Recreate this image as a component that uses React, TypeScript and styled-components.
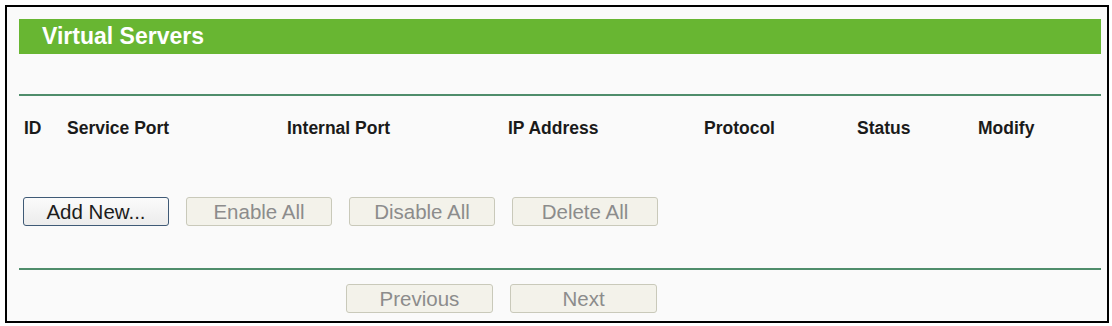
import React from "react";
import styled, { createGlobalStyle } from "styled-components";

const GlobalStyle = createGlobalStyle`
  html, body {
    margin: 0;
    padding: 0;
    background: #ffffff;
  }
  body {
    font-family: "Liberation Sans", Arial, sans-serif;
  }
`;

const Frame = styled.div`
  box-sizing: border-box;
  margin: 5px 0 0 5px;
  width: 1104px;
  height: 318px;
  border: 2px solid #000;
  background: #fafafa;
  padding: 12px 6px 8px 12px;
  display: flex;
  flex-direction: column;
`;

const TitleBar = styled.div`
  height: 35px;
  background: #68b632;
  color: #ffffff;
  font-weight: bold;
  font-size: 23px;
  line-height: 35px;
  padding-left: 23px;
`;

const Divider = styled.div<{ $top: number }>`
  height: 2px;
  margin-top: ${(p) => p.$top}px;
  background: #4f8d6b;
`;

const HeadRow = styled.div`
  height: 64px;
  display: grid;
  grid-template-columns: 43px 220px 221px 196px 153px 121px 1fr;
  align-items: center;
  padding-left: 5px;
  font-weight: bold;
  font-size: 17.5px;
  color: #1a1a1a;
`;

const ButtonRow = styled.div<{ $top: number; $left: number }>`
  display: flex;
  gap: 17px;
  margin-top: ${(p) => p.$top}px;
  padding-left: ${(p) => p.$left}px;
`;

const Btn = styled.button<{ $w: number }>`
  box-sizing: border-box;
  width: ${(p) => p.$w}px;
  height: 29px;
  padding: 0;
  border-radius: 3px;
  font-family: "Liberation Sans", Arial, sans-serif;
  font-size: 20.5px;
  line-height: 27px;
  border: 1px solid #c9c9ba;
  background: #f3f2ea;
  color: #8c8c8c;

  &:enabled {
    border-color: #3f5a76;
    background: linear-gradient(#fbfbfb, #ececec);
    color: #1c1c1c;
  }
`;

const columns = [
  "ID",
  "Service Port",
  "Internal Port",
  "IP Address",
  "Protocol",
  "Status",
  "Modify",
];

export default function App() {
  return (
    <>
      <GlobalStyle />
      <Frame>
        <TitleBar>Virtual Servers</TitleBar>
        <Divider $top={40} />
        <HeadRow>
          {columns.map((c) => (
            <span key={c}>{c}</span>
          ))}
        </HeadRow>
        <ButtonRow $top={37} $left={4}>
          <Btn $w={146}>Add New...</Btn>
          <Btn $w={146} disabled>
            Enable All
          </Btn>
          <Btn $w={146} disabled>
            Disable All
          </Btn>
          <Btn $w={146} disabled>
            Delete All
          </Btn>
        </ButtonRow>
        <Divider $top={42} />
        <ButtonRow $top={14} $left={327}>
          <Btn $w={147} disabled>
            Previous
          </Btn>
          <Btn $w={147} disabled>
            Next
          </Btn>
        </ButtonRow>
      </Frame>
    </>
  );
}
